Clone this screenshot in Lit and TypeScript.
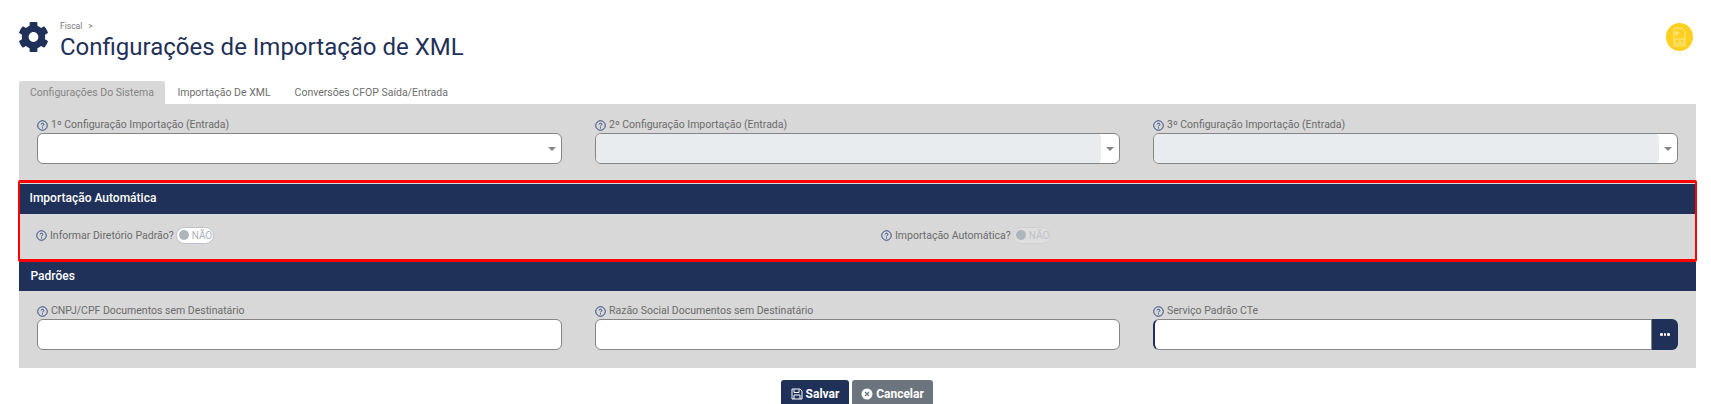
import { LitElement, html, css, svg } from "lit";
import { customElement } from "lit/decorators.js";

const help = html`<svg class="help" viewBox="0 0 12 12" aria-hidden="true">
  <circle cx="6" cy="6" r="5.2" fill="none" stroke="#1f3a75" stroke-width="1"></circle>
  <path d="M4.5 4.8C4.5 3.1 7.5 3.1 7.5 4.8C7.5 5.9 6 5.8 6 7" fill="none" stroke="#1f3a75" stroke-width="1"></path>
  <rect x="5.5" y="8" width="1" height="1.2" fill="#1f3a75"></rect>
</svg>`;

const gear = svg`<path fill="#1f3158" d="M487.4 315.7l-42.6-24.6c4.3-23.2 4.3-47 0-70.2l42.6-24.6c4.9-2.8 7.1-8.6 5.5-14-11.1-35.6-30-67.8-54.7-94.6-3.8-4.1-10-5.1-14.8-2.3L380.8 110c-17.9-15.4-38.5-27.3-60.8-35.1V25.8c0-5.6-3.9-10.5-9.4-11.7-36.7-8.2-74.3-7.8-109.2 0-5.5 1.2-9.4 6.1-9.4 11.7V75c-22.2 7.9-42.8 19.8-60.8 35.1L88.7 85.5c-4.9-2.8-11-1.9-14.8 2.3-24.7 26.7-43.6 58.9-54.7 94.6-1.7 5.4.6 11.2 5.5 14L67.3 221c-4.3 23.2-4.3 47 0 70.2l-42.6 24.6c-4.9 2.8-7.1 8.6-5.5 14 11.1 35.6 30 67.8 54.7 94.6 3.8 4.1 10 5.1 14.8 2.3l42.6-24.6c17.9 15.4 38.5 27.3 60.8 35.1v49.2c0 5.6 3.9 10.5 9.4 11.7 36.7 8.2 74.3 7.8 109.2 0 5.5-1.2 9.4-6.1 9.4-11.7v-49.2c22.2-7.9 42.8-19.8 60.8-35.1l42.6 24.6c4.9 2.8 11 1.9 14.8-2.3 24.7-26.7 43.6-58.9 54.7-94.6 1.5-5.5-.7-11.3-5.6-14.1zM256 336c-44.1 0-80-35.9-80-80s35.9-80 80-80 80 35.9 80 80-35.9 80-80 80z"></path>`;

@customElement("app-root")
export class AppRoot extends LitElement {
  static styles = css`
    :host {
      display: block;
      height: 404px;
      overflow: hidden;
      background: #fff;
      font-family: Roboto, "Liberation Sans", sans-serif;
      color: #6b6b6b;
    }
    .head {
      display: flex;
      align-items: flex-start;
      height: 81px;
      box-sizing: border-box;
      padding: 21px 18px 0 19px;
    }
    .gear { width: 29px; height: 30px; margin: 1px 12px 0 0; flex: none; }
    .titles { flex: 1; }
    .crumb { display: flex; gap: 6px; font-size: 8.5px; line-height: 11px; color: #777; }
    h1 {
      margin: 0;
      font-size: 24px;
      line-height: 30px;
      font-weight: 400;
      color: #1f3158;
    }
    .badge {
      width: 27px;
      height: 28px;
      margin-top: 2px;
      border-radius: 50%;
      background: #fdcf1f;
      display: flex;
      align-items: center;
      justify-content: center;
      flex: none;
    }
    .badge svg { width: 13px; height: 20px; }
    .tabs {
      display: flex;
      height: 23px;
      margin-left: 18.5px;
      font-size: 10.5px;
      line-height: 23px;
    }
    .tab { padding: 0 12px; color: #6e6e6e; }
    .tab.active {
      padding: 0 11.5px;
      background: #d8d8d8;
      color: #858585;
      border-radius: 3px 3px 0 0;
    }
    .panel {
      margin: 0 15px 0 18.5px;
      height: 264px;
      background: #d8d8d8;
    }
    .row3 {
      display: grid;
      grid-template-columns: repeat(3, 525px);
      column-gap: 33px;
      padding: 0 18.5px;
    }
    .top { padding-top: 13px; height: 63px; }
    .label {
      display: flex;
      align-items: center;
      height: 16px;
      font-size: 10.5px;
      line-height: 16px;
      color: #6b6b6b;
    }
    .help { width: 11px; height: 11px; margin-right: 3px; flex: none; margin-top: 1px; }
    .input {
      display: block;
      box-sizing: border-box;
      width: 100%;
      height: 31px;
      border: 1px solid #858585;
      border-radius: 6px;
      background: #fff;
      padding: 0;
      margin: 0;
      outline: none;
    }
    .select {
      position: relative;
      display: flex;
      box-sizing: border-box;
      height: 31px;
      border: 1px solid #858585;
      border-radius: 6px;
      background: #fff;
      overflow: hidden;
    }
    .fill { flex: 1; }
    .select.off .fill { background: #e9ecef; border-radius: 4px; }
    .caret { width: 18px; display: flex; align-items: center; justify-content: center; box-sizing: border-box; }
    .caret i {
      width: 0;
      height: 0;
      border-left: 4.5px solid transparent;
      border-right: 4.5px solid transparent;
      border-top: 4px solid #858585;
    }
    .auto {
      box-sizing: border-box;
      border: solid #ff0000;
      border-width: 3px 2.5px;
      border-radius: 2px;
      height: 82px;
      margin: 0 -1px 0 -0.5px;
    }
    .bar {
      background: #1f3158;
      color: #fff;
      font-weight: 500;
      font-size: 12px;
      display: flex;
      align-items: center;
      box-sizing: border-box;
      padding: 0 0 2px 12px;
    }
    .auto .bar { height: 30px; margin-top: 1px; padding-left: 9.5px; }
    .switches {
      display: grid;
      grid-template-columns: 845px 1fr;
      padding: 12px 0 0 16px;
    }
    .sw { display: flex; align-items: center; height: 18px; font-size: 10.5px; }
    .toggle {
      box-sizing: border-box;
      display: flex;
      align-items: center;
      width: 38px;
      height: 17px;
      margin-left: 2px;
      padding-left: 2px;
      border: 1px solid #bfc3c9;
      border-radius: 9px;
      background: #fff;
      font-size: 10px;
      color: #aab0b8;
    }
    .toggle b {
      width: 10px;
      height: 10px;
      border-radius: 50%;
      background: #adb5bd;
      margin-right: 3px;
      flex: none;
    }
    .toggle.off { background: #dedede; color: #bfc2c6; border-color: #cfd1d4; }
    .pad { height: 29px; }
    .bottom { padding-top: 12px; }
    .group { display: flex; height: 31px; }
    .group .input {
      flex: 1;
      width: auto;
      min-width: 0;
      border-radius: 6px 0 0 6px;
      border-left: 2px solid #1f3158;
    }
    .more {
      width: 26px;
      flex: none;
      background: #1f3158;
      color: #fff;
      border-radius: 0 6px 6px 0;
      display: flex;
      align-items: center;
      justify-content: center;
      gap: 1px;
    }
    .more i { width: 2.5px; height: 2.5px; background: #fff; border-radius: 50%; }
    .actions {
      display: flex;
      justify-content: center;
      gap: 3px;
      padding: 12px 0 0 3px;
    }
    .btn {
      display: flex;
      align-items: center;
      justify-content: center;
      height: 32px;
      border: 0;
      border-radius: 3px;
      color: #fff;
      font-family: inherit;
      font-size: 12px;
      font-weight: 700;
      gap: 3px;
      padding: 0 0 4px 0;
      box-sizing: border-box;
    }
    .btn svg { width: 12px; height: 12px; }
    .save { width: 68px; background: #1f3158; }
    .cancel { width: 81px; background: #6c757d; }
  `;

  field(label: string, off: boolean) {
    return html`<div>
      <div class="label">${help}${label}</div>
      <div class="select ${off ? "off" : ""}">
        <div class="fill"></div>
        <div class="caret"><i></i></div>
      </div>
    </div>`;
  }

  text(label: string) {
    return html`<div>
      <div class="label">${help}${label}</div>
      <input class="input" />
    </div>`;
  }

  render() {
    return html`
      <header class="head">
        <svg class="gear" viewBox="17 12 478 488" preserveAspectRatio="none">${gear}</svg>
        <div class="titles">
          <span class="crumb"><span>Fiscal</span><span>&gt;</span></span>
          <h1>Configurações de Importação de XML</h1>
        </div>
        <div class="badge">
          <svg viewBox="0 0 13 20" fill="none" stroke="#fde58a" stroke-width="1">
            <path d="M1 1H9L12 4V19H1Z"></path>
            <path d="M1.5 6H6.5M4 3.5V8.5" stroke-width="1.4"></path>
            <path d="M2 12H11V17H2Z M6 14H8V16H6Z"></path>
          </svg>
        </div>
      </header>
      <nav class="tabs">
        <div class="tab active">Configurações Do Sistema</div>
        <div class="tab">Importação De XML</div>
        <div class="tab">Conversões CFOP Saída/Entrada</div>
      </nav>
      <main class="panel">
        <div class="row3 top">
          ${this.field("1º Configuração Importação (Entrada)", false)}
          ${this.field("2º Configuração Importação (Entrada)", true)}
          ${this.field("3º Configuração Importação (Entrada)", true)}
        </div>
        <section class="auto">
          <div class="bar">Importação Automática</div>
          <div class="switches">
            <div class="sw">${help}Informar Diretório Padrão?<span class="toggle"><b></b>NÃO</span></div>
            <div class="sw">${help}Importação Automática?<span class="toggle off"><b></b>NÃO</span></div>
          </div>
        </section>
        <div class="bar pad">Padrões</div>
        <div class="row3 bottom">
          ${this.text("CNPJ/CPF Documentos sem Destinatário")}
          ${this.text("Razão Social Documentos sem Destinatário")}
          <div>
            <div class="label">${help}Serviço Padrão CTe</div>
            <div class="group">
              <input class="input" />
              <div class="more"><i></i><i></i><i></i></div>
            </div>
          </div>
        </div>
      </main>
      <div class="actions">
        <button class="btn save">
          <svg viewBox="0 0 12 12" fill="none" stroke="#fff" stroke-width="1">
            <path d="M1 1H9L11 3V11H1Z"></path><path d="M3 1.5V4.5H8V1.5M3 11V7H9V11"></path>
          </svg>Salvar
        </button>
        <button class="btn cancel">
          <svg viewBox="0 0 12 12">
            <circle cx="6" cy="6" r="5.5" fill="#fff"></circle>
            <path d="M4 4L8 8M8 4L4 8" stroke="#6c757d" stroke-width="1.2"></path>
          </svg>Cancelar
        </button>
      </div>
    `;
  }
}
